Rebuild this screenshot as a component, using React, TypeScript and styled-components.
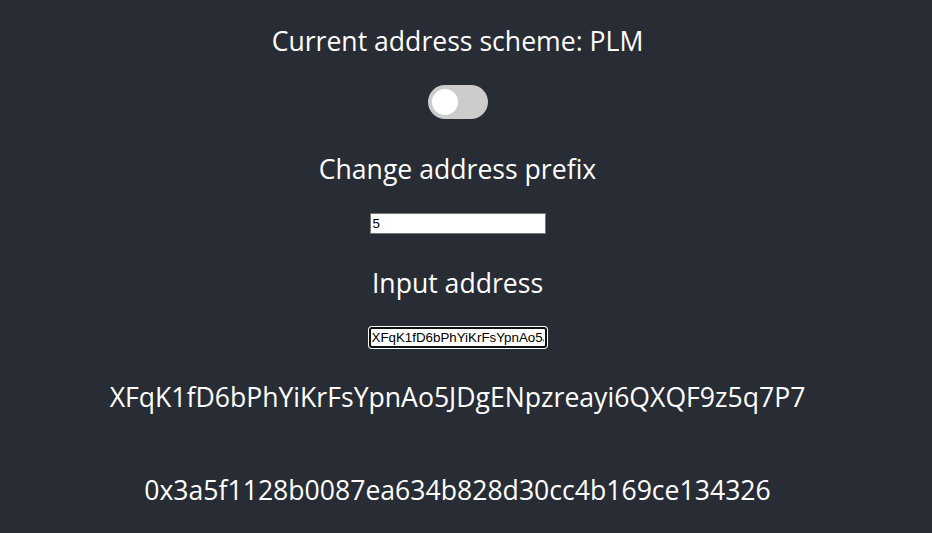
import React, { useState } from "react"
import styled, { createGlobalStyle } from "styled-components"

const ADDRESS = "XFqK1fD6bPhYiKrFsYpnAo5JDgENpzreayi6QXQF9z5q7P7"
const HEX = "0x3a5f1128b0087ea634b828d30cc4b169ce134326"

const GlobalStyle = createGlobalStyle`
  html, body {
    margin: 0;
    padding: 0;
    background-color: #282c34;
  }
  body {
    font-family: "Open Sans", "Noto Sans", sans-serif;
  }
`

const App = () => {
  const [checked, setChecked] = useState(false)
  const [prefix, setPrefix] = useState("5")
  const [address, setAddress] = useState(ADDRESS)

  return (
    <>
      <GlobalStyle />
      <Page>
        <Line>Current address scheme: PLM</Line>
        <Switch $top={26}>
          <input type="checkbox" checked={checked} onChange={() => setChecked(!checked)} />
          <Slider />
        </Switch>
        <Line $top={32}>Change address prefix</Line>
        <TextInput $top={26} value={prefix} onChange={(e) => setPrefix(e.target.value)} />
        <Line $top={31}>Input address</Line>
        <TextInput $top={26} $focused value={address} onChange={(e) => setAddress(e.target.value)} />
        <Line $top={31}>{address}</Line>
        <Line $top={57}>{HEX}</Line>
      </Page>
    </>
  )
}

// leaves room where the original page had its scrollbar
const Page = styled.div`
  min-height: 100vh;
  box-sizing: border-box;
  padding: 23px 17px 0 0;
  display: flex;
  flex-direction: column;
  align-items: center;
  color: white;
`

const Line = styled.p<{ $top?: number }>`
  margin: ${(p) => p.$top ?? 0}px 0 0;
  font-size: 26.6px;
  line-height: 36px;
  text-align: center;
  white-space: nowrap;
`

const Switch = styled.label<{ $top?: number }>`
  position: relative;
  display: inline-block;
  width: 60px;
  height: 34px;
  margin-top: ${(p) => p.$top ?? 0}px;

  input {
    opacity: 0;
    width: 0;
    height: 0;
  }

  input:checked + span {
    background-color: #2196f3;
  }

  input:checked + span::before {
    transform: translateX(26px);
  }
`

const Slider = styled.span`
  position: absolute;
  inset: 0;
  cursor: pointer;
  background-color: #ccc;
  border-radius: 34px;
  transition: 0.4s;

  &::before {
    content: "";
    position: absolute;
    width: 26px;
    height: 26px;
    left: 4px;
    bottom: 4px;
    background-color: white;
    border-radius: 50%;
    transition: 0.4s;
  }
`

const TextInput = styled.input<{ $top?: number; $focused?: boolean }>`
  margin-top: ${(p) => p.$top ?? 0}px;
  box-sizing: border-box;
  width: ${(p) => (p.$focused ? "178px" : "176px")};
  height: 21px;
  padding: 1px 2px;
  font-family: "Liberation Sans", Arial, sans-serif;
  font-size: 13.33px;
  color: #000;
  background: #fff;
  border: 1px solid #767676;
  border-radius: 0;
  outline: none;
  ${(p) => p.$focused && `
    border: 2px solid #101010;
    border-radius: 3px;
    box-shadow: 0 0 0 1px #fff;
    padding: 0 1px;
  `}
`

export default App
